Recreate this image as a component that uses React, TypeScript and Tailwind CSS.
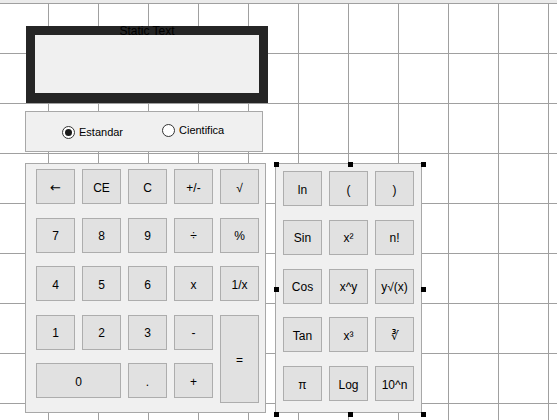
import React from "react";

function Btn({ label, className = "" }: { label: React.ReactNode; className?: string }) {
  return (
    <div
      className={
        "flex items-center justify-center border border-[#adadad] bg-[#e1e1e1] text-[12px] leading-[14px] text-black pt-[2px] " +
        className
      }
    >
      {label}
    </div>
  );
}

function Radio({ checked }: { checked?: boolean }) {
  return (
    <div className="w-[13px] h-[13px] rounded-full border border-[#333333] bg-white flex items-center justify-center">
      {checked ? <div className="w-[7px] h-[7px] rounded-full bg-[#1a1a1a]" /> : null}
    </div>
  );
}

function Handle({ className }: { className: string }) {
  return <div className={"absolute w-[5px] h-[5px] bg-black " + className} />;
}

export default function App() {
  return (
    <div className="w-[557px] h-[420px] overflow-hidden bg-white font-['Liberation_Sans',Arial,sans-serif] [background-image:linear-gradient(to_right,#a0a0a0_1px,transparent_1px),linear-gradient(to_bottom,#a0a0a0_1px,transparent_1px)] [background-size:50px_50px] [background-position:48px_3px]">
      <div className="h-[3px] bg-[#ebebeb]" />

      {/* Display */}
      <div className="ml-[26px] mt-[23px] w-[242px] h-[77px] bg-[#252525] px-[9px] pb-[10px] flex flex-col">
        <div className="h-[9px] overflow-hidden text-center">
          <div className="mt-[-2px] text-[12px] leading-[14px] text-black">Static Text</div>
        </div>
        <div className="flex-1 bg-[#f0f0f0]" />
      </div>

      {/* Radio group */}
      <div className="ml-[25px] mt-[8px] w-[238px] h-[41px] border border-[#a8a8a8] bg-[#f0f0f0] flex items-center pl-[36px] text-[11px] leading-[13px] text-black">
        <div className="w-[100px] flex items-center gap-[4px] pt-[1px]">
          <Radio checked />
          <span>Estandar</span>
        </div>
        <div className="flex items-center gap-[4px] mt-[-2px]">
          <Radio />
          <span>Cientifica</span>
        </div>
      </div>

      {/* Keypads */}
      <div className="ml-[25px] mt-[11px] flex gap-[9px]">
        <div className="w-[241px] h-[250px] border border-[#a8a8a8] bg-[#f0f0f0] pt-[5px] pl-[10px] grid grid-cols-[39px_39px_39px_39px_39px] grid-rows-[35px_35px_35px_35px_35px] gap-x-[7px] gap-y-[13.5px] content-start">
          <Btn label={<span className="font-['DejaVu_Sans',sans-serif] text-[13px]">←</span>} />
          <Btn label="CE" />
          <Btn label="C" />
          <Btn label="+/-" />
          <Btn label="√" />

          <Btn label="7" />
          <Btn label="8" />
          <Btn label="9" />
          <Btn label="÷" />
          <Btn label="%" />

          <Btn label="4" />
          <Btn label="5" />
          <Btn label="6" />
          <Btn label="x" />
          <Btn label="1/x" />

          <Btn label="1" />
          <Btn label="2" />
          <Btn label="3" />
          <Btn label="-" />
          <Btn label="=" className="row-span-2 h-[88px] self-start" />

          <Btn label="0" className="col-span-2" />
          <Btn label="." />
          <Btn label="+" />
        </div>

        <div className="relative w-[147px] h-[250px]">
          <div className="w-[147px] h-[250px] border border-[#a8a8a8] bg-[#f0f0f0] pt-[7px] pl-[7px] grid grid-cols-[39px_39px_39px] grid-rows-[35px_35px_35px_35px_35px] gap-x-[7px] gap-y-[13.75px] content-start">
            <Btn label="ln" />
            <Btn label="(" />
            <Btn label=")" />

            <Btn label="Sin" />
            <Btn label="x²" />
            <Btn label="n!" />

            <Btn label="Cos" />
            <Btn label="x^y" />
            <Btn label="y√(x)" />

            <Btn label="Tan" />
            <Btn label="x³" />
            <Btn label="∛" />

            <Btn label="π" />
            <Btn label="Log" />
            <Btn label="10^n" />
          </div>
          <Handle className="left-[-1px] top-[-1px]" />
          <Handle className="left-[73px] top-[-1px]" />
          <Handle className="left-[146px] top-[-1px]" />
          <Handle className="left-[-1px] top-[124px]" />
          <Handle className="left-[146px] top-[124px]" />
          <Handle className="left-[-1px] top-[249px]" />
          <Handle className="left-[73px] top-[249px]" />
          <Handle className="left-[146px] top-[249px]" />
        </div>
      </div>
    </div>
  );
}
